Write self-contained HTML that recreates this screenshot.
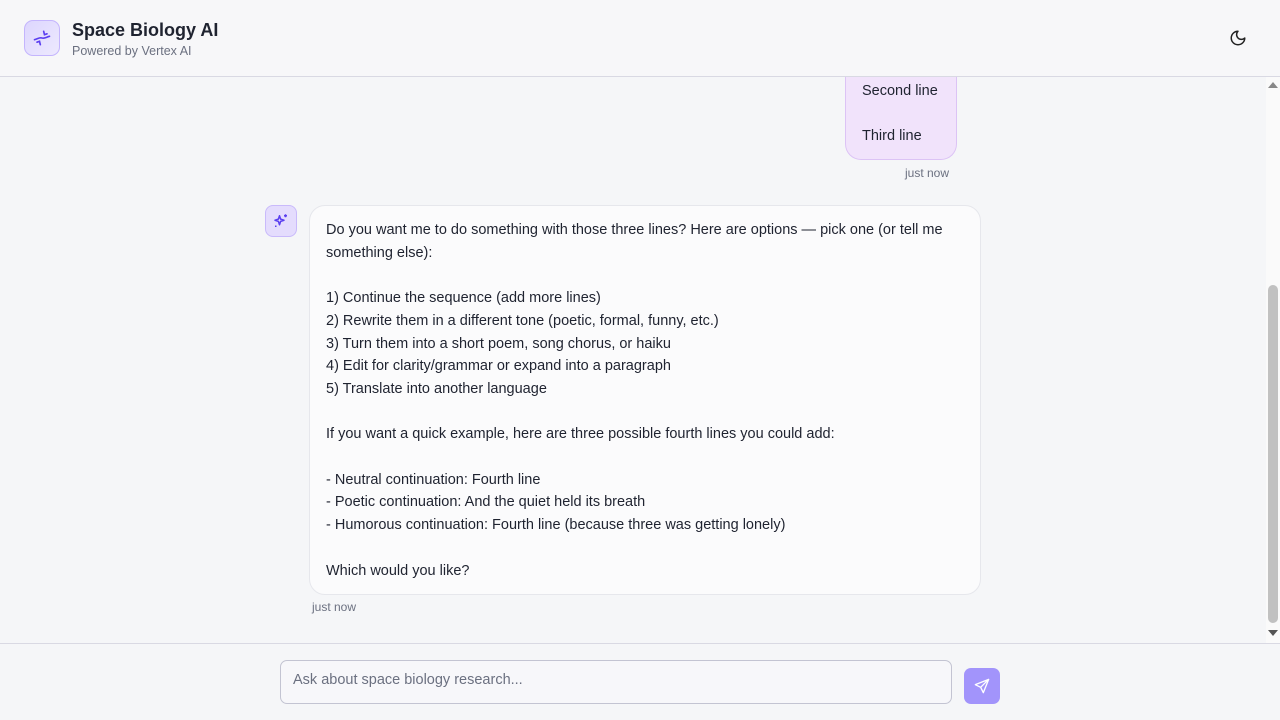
<!DOCTYPE html>
<html><head><meta charset="utf-8"><style>
*{box-sizing:border-box;margin:0;padding:0}
body{width:1280px;height:720px;overflow:hidden;background:#f5f6f8;font-family:"Liberation Sans",sans-serif;color:#1f2330;position:relative}
.hdr{position:absolute;left:0;top:0;width:1280px;height:77px;border-bottom:1px solid #d9d9e3;background:#f7f7f9}
.logo{position:absolute;left:24px;top:20px;width:36px;height:36px;border-radius:9px;background:linear-gradient(135deg,#ddd6fe,#ede9fe);border:1px solid #c4b5fd;display:flex;align-items:center;justify-content:center}
.t1{position:absolute;left:72px;top:20px;font-size:18px;font-weight:bold;color:#1f2330}
.t2{position:absolute;left:72px;top:44px;font-size:12.5px;color:#6b7080}
.main{position:absolute;left:0;top:77px;width:1266px;height:566px;overflow:hidden}
.sb{position:absolute;left:1266px;top:77px;width:14px;height:566px;background:#fafafa}
.thumb{position:absolute;left:1268px;top:285px;width:10px;height:338px;background:#c1c1c1;border-radius:5px}
.ub{position:absolute;left:845px;top:-10px;width:112px;height:93px;background:#f1e3fb;border:1px solid #dcc3f5;border-radius:0 0 16px 16px;border-top:none}
.ub div{position:absolute;left:16px;font-size:14.5px}
.ts{position:absolute;font-size:12px;color:#6b7080}
.av{position:absolute;left:265px;top:128px;width:32px;height:32px;border-radius:8px;background:#e4dcfd;border:1px solid #c9bafb;display:flex;align-items:center;justify-content:center}
.ab{position:absolute;left:309px;top:128px;width:672px;height:390px;background:#fbfbfc;border:1px solid #e6e7ec;border-radius:16px;padding:13px 16px 12px;font-size:14.5px;line-height:22.7px;white-space:pre-wrap}
.ftr{position:absolute;left:0;top:643px;width:1280px;height:77px;border-top:1px solid #d9d9e3;background:#f5f6f8}
.inp{position:absolute;left:280px;top:16px;width:672px;height:44px;border:1px solid #c3c4d2;border-radius:7px;background:#f7f7fa;font-size:14.5px;color:#6b7080;padding:11px 12px}
.send{position:absolute;left:964px;top:24px;width:36px;height:36px;border-radius:7px;background:#a294fb;display:flex;align-items:center;justify-content:center}
</style></head><body>
<div class="hdr">
<div class="logo"><svg width="20" height="20" viewBox="0 0 24 24" fill="none" stroke="#5b3ff0" stroke-width="2" stroke-linecap="round"><path d="M3 14c4-1 6-3 9-2s5-1 9-2"/><path d="M14 4l1 4 3-1M10 20l-1-4-3 1"/></svg></div>
<div class="t1">Space Biology AI</div>
<div class="t2">Powered by Vertex AI</div>
<svg style="position:absolute;left:1229px;top:29px" width="18" height="18" viewBox="0 0 24 24" fill="none" stroke="#222" stroke-width="2" stroke-linejoin="round"><path d="M12 3a6 6 0 0 0 9 9 9 9 0 1 1-9-9z"/></svg>
</div>
<div class="main">
<div class="ub"><div style="top:16px">Second line</div><div style="top:61px">Third line</div></div>
<div class="ts" style="left:905px;top:89px">just now</div>
<div class="av"><svg width="18" height="18" viewBox="0 0 24 24" fill="none" stroke="#5b3ff0" stroke-width="2" stroke-linejoin="round"><path d="M10 5l1.5 4.5L16 11l-4.5 1.5L10 17l-1.5-4.5L4 11l4.5-1.5z"/><path d="M18 3v4M16 5h4M5 18v2M4 19h2"/></svg></div>
<div class="ab">Do you want me to do something with those three lines? Here are options — pick one (or tell me something else):

1) Continue the sequence (add more lines)
2) Rewrite them in a different tone (poetic, formal, funny, etc.)
3) Turn them into a short poem, song chorus, or haiku
4) Edit for clarity/grammar or expand into a paragraph
5) Translate into another language

If you want a quick example, here are three possible fourth lines you could add:

- Neutral continuation: Fourth line
- Poetic continuation: And the quiet held its breath
- Humorous continuation: Fourth line (because three was getting lonely)

Which would you like?</div>
<div class="ts" style="left:312px;top:523px">just now</div>
</div>
<div class="sb"></div><div class="thumb"></div>
<div style="position:absolute;left:1268px;top:82px;width:0;height:0;border-left:5px solid transparent;border-right:5px solid transparent;border-bottom:6px solid #888"></div>
<div style="position:absolute;left:1268px;top:630px;width:0;height:0;border-left:5px solid transparent;border-right:5px solid transparent;border-top:6px solid #555"></div>
<div class="ftr">
<div class="inp">Ask about space biology research...</div>
<div class="send"><svg width="16" height="16" viewBox="0 0 24 24" fill="none" stroke="#fff" stroke-width="2" stroke-linejoin="round"><path d="M22 2L2 10l8 4 4 8z M10 14l12-12"/></svg></div>
</div>
</body></html>
